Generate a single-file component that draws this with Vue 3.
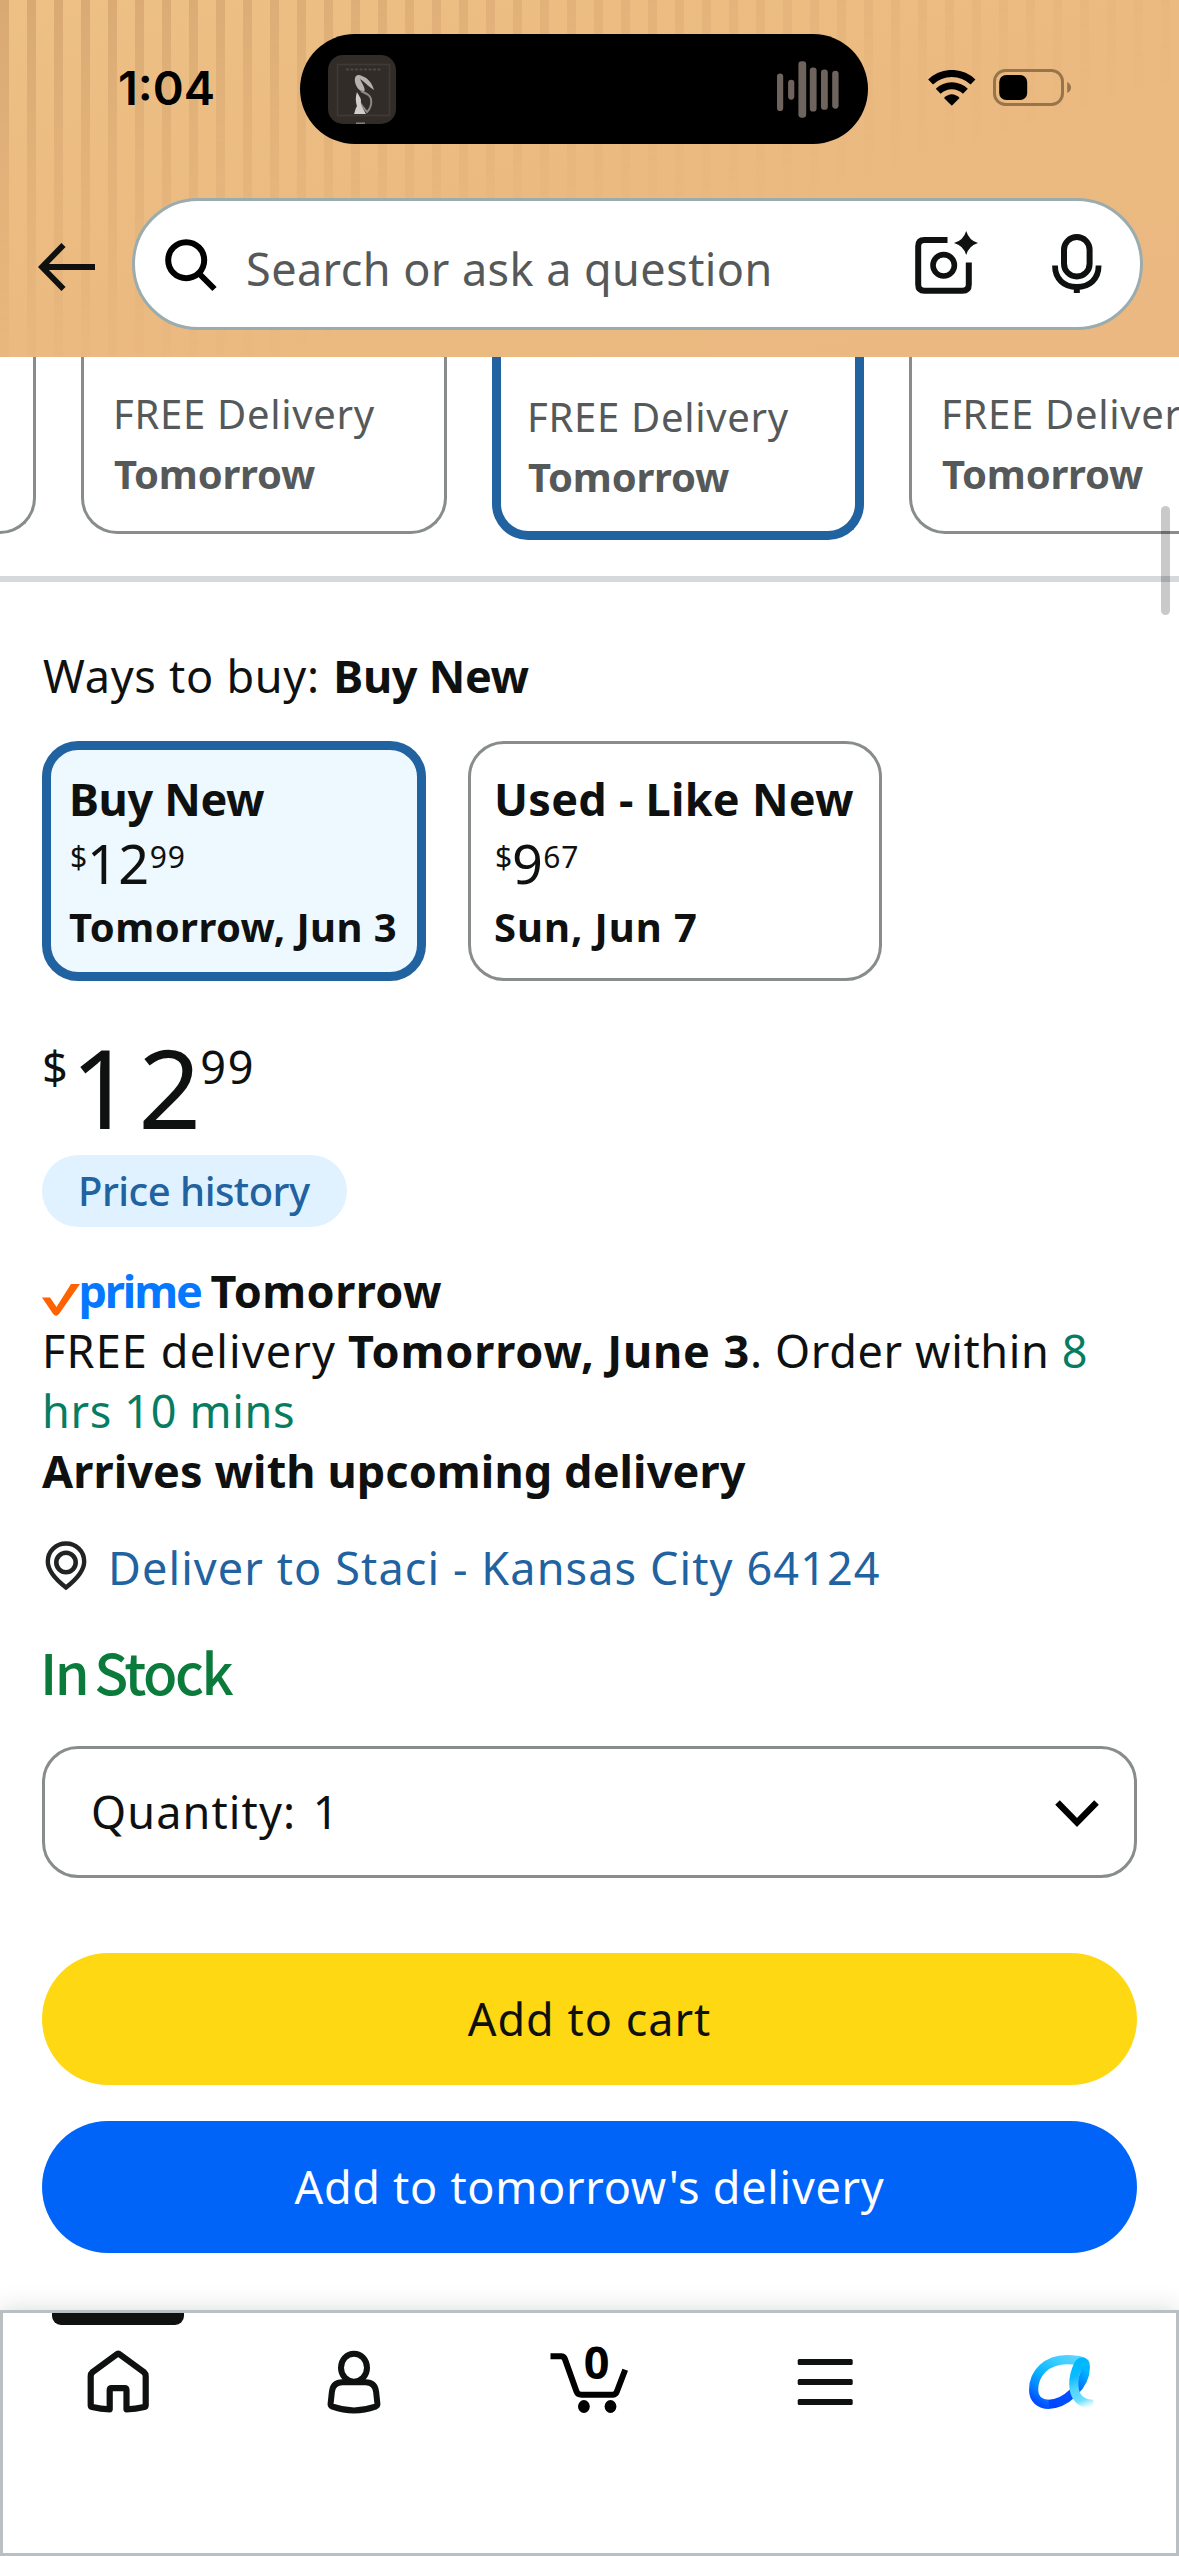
<script setup>
const deliveryCards = [
  { id: 'a', when: '', selected: false },
  { id: 'b', when: 'Tomorrow', selected: false },
  { id: 'c', when: 'Tomorrow', selected: true },
  { id: 'd', when: 'Tomorrow', selected: false },
]

const buyOptions = [
  { title: 'Buy New', whole: '12', cents: '99', date: 'Tomorrow, Jun 3', kind: 'new' },
  { title: 'Used - Like New', whole: '9', cents: '67', date: 'Sun, Jun 7', kind: 'used' },
]

const waveBars = [
  { x: 0, y: 12.5, w: 6.2, h: 37.5 },
  { x: 11.1, y: 18.7, w: 6.2, h: 20 },
  { x: 21.4, y: 0.3, w: 7.8, h: 56.4 },
  { x: 32.8, y: 6.5, w: 6.8, h: 44 },
  { x: 44, y: 8.5, w: 6.8, h: 40.3 },
  { x: 55.2, y: 9.7, w: 6.4, h: 38 },
]
</script>

<template>
  <div class="screen">
    <header class="header">
      <div class="stripes"></div>
      <div class="status">
        <span class="time">1:04</span>
        <div class="island">
          <svg class="album" width="68" height="69" viewBox="0 0 68 69">
            <rect width="68" height="69" rx="15" fill="#322c29" />
            <rect x="9.5" y="9.5" width="52" height="51" fill="none" stroke="#403a37" stroke-width="1.6" />
            <path d="M18 14.5h35" stroke="#4b4643" stroke-width="2" stroke-dasharray="3 1.5" />
            <path d="M27 27C26 20 30 19 34 21C40 23 44 28 46 35C41 32 38 28 32 24C35 30 38 34 36 37C31 36 28 32 27 27Z" fill="#b5b1ae" />
            <path d="M33 36C39 39 42 40 43 44C44 50 42 54 39 57C36 53 33 50 31 46" fill="none" stroke="#8d8885" stroke-width="2" />
            <path d="M29 37C27 43 28 48 29 51C27 54 27 57 26 59H38C35 53 32 50 33 46C33 42 30 40 29 37Z" fill="#d0cdca" />
            <path d="M28 68.2h9" stroke="#8b8785" stroke-width="1.4" />
          </svg>
          <svg class="wave" width="62" height="57" viewBox="0 0 62 57">
            <rect v-for="b in waveBars" :key="b.x" :x="b.x" :y="b.y" :width="b.w" :height="b.h" rx="3.1" fill="#6e645d" />
          </svg>
        </div>
        <svg class="wifi" width="48" height="36" viewBox="0 0 48 36">
          <path d="M2.6 12.8A30.5 30.5 0 0 1 45 12.8" fill="none" stroke="#000" stroke-width="7" transform="translate(0 -.8)" />
          <path d="M10.2 21.2A19.5 19.5 0 0 1 37.4 21.2" fill="none" stroke="#000" stroke-width="7" />
          <path d="M16 28Q23.8 20.500 31.6 28L23.800 35.700Z" fill="#000" />
        </svg>
        <svg class="battery" width="79" height="38" viewBox="0 0 79 38">
          <rect x="1.500" y="1.500" width="68" height="34" rx="11" fill="none" stroke="#97754b" stroke-width="3" />
          <rect x="6.200" y="6" width="28" height="25" rx="7" fill="#000" />
          <path d="M74.200 13Q78 15 78 18.500Q78 22 74.200 24Z" fill="#97754b" />
        </svg>
      </div>
      <div class="search-row">
        <svg class="back" width="58" height="48" viewBox="0 0 58 48">
          <path d="M57 24H4M25.500 2L4 24L25.500 46" fill="none" stroke="#0f1111" stroke-width="5.800" />
        </svg>
        <div class="search">
          <svg class="magnifier" width="54" height="54" viewBox="0 0 54 54">
            <circle cx="21.200" cy="21.200" r="18" fill="none" stroke="#000" stroke-width="6" />
            <path d="M34 34.500L49.500 50" stroke="#000" stroke-width="6" />
          </svg>
          <span class="placeholder">Search or ask a question</span>
          <svg class="camera" width="64" height="64" viewBox="0 0 64 64">
            <path d="M32.500 9H9.500Q3.200 9 3.200 15.300V53.500Q3.200 59.800 9.500 59.800H47.500Q53.800 59.800 53.800 53.500V31.500" fill="none" stroke="#0f1111" stroke-width="6" />
            <circle cx="28.700" cy="34.300" r="10.700" fill="none" stroke="#0f1111" stroke-width="5.600" />
            <path d="M51.200 0Q54 9.500 63 12Q54 14.500 51.200 24Q48.400 14.500 39 12Q48.400 9.500 51.200 0Z" fill="#0f1111" />
          </svg>
          <svg class="mic" width="50" height="60" viewBox="0 0 50 60">
            <rect x="12" y="3" width="25.600" height="39.500" rx="12.800" fill="none" stroke="#0f1111" stroke-width="6" />
            <path d="M3 31.500C3 45 12 53 24.800 53S46.600 45 46.600 31.500" fill="none" stroke="#0f1111" stroke-width="5.800" />
            <path d="M24.800 52V59" stroke="#0f1111" stroke-width="6" />
          </svg>
        </div>
      </div>
    </header>

    <section class="carousel">
      <div v-for="c in deliveryCards" :key="c.id" class="ship-card" :class="[`card-${c.id}`, { selected: c.selected }]">
        <template v-if="c.when">
          <p class="ship-free">FREE Delivery</p>
          <p class="ship-when">{{ c.when }}</p>
        </template>
      </div>
    </section>
    <div class="divider"></div>
    <div class="scrollbar"></div>

    <main class="content">
      <p class="ways"><span class="ways-label">Ways to buy: </span><b>Buy New</b></p>

      <div class="options">
        <div v-for="o in buyOptions" :key="o.title" class="option" :class="o.kind">
          <p class="opt-title">{{ o.title }}</p>
          <p class="opt-price"><span class="sup sign">$</span><span class="whole">{{ o.whole }}</span><span class="sup">{{ o.cents }}</span></p>
          <p class="opt-date">{{ o.date }}</p>
        </div>
      </div>

      <div class="price"><span class="p-sup p-sign">$</span><span class="p-whole">12</span><span class="p-sup p-cents">99</span></div>

      <div class="history">Price history</div>

      <div class="delivery">
        <div class="prime-line">
          <svg class="check" width="39" height="34" viewBox="0 0 39 34">
            <path d="M0 13.500H8L14.500 23L29 0H38L17 30Q14 33.500 11.200 30Z" fill="#ff6200" />
          </svg>
          <span class="prime">prime</span>
          <b class="prime-when">Tomorrow</b>
        </div>
        <p class="line"><span class="free">FREE delivery </span><b class="day">Tomorrow, June 3</b><span class="order">. Order within </span><span class="green">8</span></p>
        <p class="line green">hrs 10 mins</p>
        <p class="line"><b class="arrives">Arrives with upcoming delivery</b></p>
      </div>

      <div class="address">
        <svg class="pin" width="42" height="50" viewBox="0 0 42 50">
          <path d="M21 2.500C31 2.500 39.200 10 39.200 20.500C39.200 30 30 39.500 21 46.500C12 39.500 2.800 30 2.800 20.500C2.800 10 11 2.500 21 2.500Z" fill="none" stroke="#222424" stroke-width="4.400" />
          <circle cx="21" cy="21.500" r="9.700" fill="none" stroke="#222424" stroke-width="4.600" />
        </svg>
        <span class="address-text">Deliver to Staci - Kansas City 64124</span>
      </div>

      <p class="stock">In Stock</p>

      <div class="quantity">
        <span class="q-label">Quantity:</span><span class="q-value">1</span>
        <svg class="chevron" width="44" height="28" viewBox="0 0 44 28">
          <path d="M2.500 2.500L22 22.500L41.500 2.500" fill="none" stroke="#000" stroke-width="6.400" />
        </svg>
      </div>

      <div class="btn cart">Add to cart</div>
      <div class="btn tomorrow">Add to tomorrow's delivery</div>
    </main>

    <nav class="nav">
      <div class="tab active">
        <svg width="90" height="72" viewBox="0 0 90 72">
          <g transform="translate(14.700 5.700)" fill="none" stroke="#0f1111" stroke-width="6.200" stroke-linejoin="round">
            <path d="M28.500 4Q30.500 2.200 32.500 4L56 21.200Q58 23 58 25.500V54.500Q58 56 56.500 56.400Q48 58.600 38.800 58.600V39.500Q38.800 37.400 36.800 37.400H24Q22 37.400 22 39.500V58.600Q13 58.600 4.500 56.400Q3 56 3 54.500V25.500Q3 23 5 21.200Z" />
          </g>
        </svg>
      </div>
      <div class="tab">
        <svg width="90" height="72" viewBox="0 0 90 72">
          <g transform="translate(18.400 5.700)" fill="none" stroke="#0f1111" stroke-width="6" stroke-linejoin="round">
            <ellipse cx="26.600" cy="17" rx="13" ry="14" />
            <path d="M15 31.600H38.200Q47.500 31.600 48.700 41L50 53Q50.200 55 48 56Q26.600 63.500 5.200 56Q3 55 3.200 53L4.500 41Q5.700 31.600 15 31.600Z" />
          </g>
        </svg>
      </div>
      <div class="tab">
        <svg class="cart-icon" width="90" height="92" viewBox="0 -20 90 92">
          <g transform="translate(6.500 1)">
            <path d="M0 10.300H10.500Q13.500 10.300 14.500 13.300L26 45.500Q27.200 48.700 31 48.700H62Q65 48.700 66.200 46L74.700 23.800" fill="none" stroke="#000" stroke-width="6" stroke-linejoin="round" />
            <ellipse cx="33.400" cy="60.500" rx="5.900" ry="6.400" fill="#000" />
            <ellipse cx="60" cy="60.500" rx="5.900" ry="6.400" fill="#000" />
            <text x="46.200" y="32.500" class="count" text-anchor="middle">0</text>
          </g>
        </svg>
      </div>
      <div class="tab">
        <svg width="90" height="72" viewBox="0 0 90 72" fill="#0f1111">
          <rect x="17.700" y="14" width="55" height="6" rx="1.500" />
          <rect x="17.700" y="34" width="55" height="6" rx="1.500" />
          <rect x="17.700" y="54" width="55" height="6" rx="1.500" />
        </svg>
      </div>
      <div class="tab">
        <svg width="90" height="72" viewBox="0 0 90 72">
          <defs>
            <linearGradient id="loop" gradientUnits="userSpaceOnUse" x1="48" y1="4" x2="16" y2="52">
              <stop offset="0" stop-color="#5ad4ff" />
              <stop offset=".25" stop-color="#35ccff" />
              <stop offset=".55" stop-color="#08b4ff" />
              <stop offset=".85" stop-color="#0578ff" />
              <stop offset="1" stop-color="#0050ff" />
            </linearGradient>
            <linearGradient id="rise" gradientUnits="userSpaceOnUse" x1="24" y1="50" x2="56" y2="14">
              <stop offset="0" stop-color="#0048ff" />
              <stop offset=".45" stop-color="#0052ff" />
              <stop offset="1" stop-color="#00b8ff" />
            </linearGradient>
            <linearGradient id="tail" gradientUnits="userSpaceOnUse" x1="50" y1="8" x2="66" y2="50">
              <stop offset="0" stop-color="#00b8ff" />
              <stop offset=".25" stop-color="#0bbcff" />
              <stop offset=".5" stop-color="#4fd3ff" />
              <stop offset=".8" stop-color="#6fdfff" />
              <stop offset="1" stop-color="#8fe4ff" stop-opacity=".05" />
            </linearGradient>
          </defs>
          <g transform="translate(12.900 10)" fill="none" stroke-width="9.200">
            <path d="M55 7C50 5.200 44 4.600 38 4.600C18 4.600 4.700 18 4.700 35C4.700 44 11 49.300 20 49.300" stroke="url(#loop)" />
            <path d="M19.500 49.300C36 49.300 56.500 31 56.500 12" stroke="url(#rise)" />
            <path d="M56.500 12C56.500 5.500 51.500 6 49.500 10C46.500 16 44.900 22 44.900 29C44.900 41 51 49.300 64.500 49.300" stroke="url(#tail)" />
          </g>
        </svg>
      </div>
    </nav>
  </div>
</template>

<style>
body {
  margin: 0;
  background: #fff;
}
</style>

<style scoped>
.screen {
  position: relative;
  display: flex;
  flex-direction: column;
  width: 1179px;
  height: 2556px;
  overflow: hidden;
  background: #fff;
  color: #0f1111;
  font-family: "Noto Sans", sans-serif;
  font-size: 45px;
  line-height: 60px;
}
p {
  margin: 0;
  white-space: nowrap;
}
svg {
  display: block;
  flex: none;
}

/* Header */
.header {
  position: relative;
  flex: none;
  height: 357px;
  background: linear-gradient(165deg, #edc085, #ebba81 50%, #eab880);
}
.stripes {
  position: absolute;
  inset: 0;
  background: repeating-linear-gradient(90deg, #cf9f6b 0 9px, transparent 9px 27px);
  mask-image: linear-gradient(163deg, rgba(0, 0, 0, 0.7), rgba(0, 0, 0, 0.36) 25%, rgba(0, 0, 0, 0.08) 50%, transparent 62%);
}
.status {
  position: relative;
  display: flex;
  align-items: flex-start;
  height: 198px;
}
.time {
  width: 182px;
  margin: 58px 0 0 118px;
  font: 600 47px/60px Inter, sans-serif;
  color: #000;
}
.island {
  display: flex;
  align-items: center;
  justify-content: space-between;
  box-sizing: border-box;
  width: 568px;
  height: 110px;
  margin-top: 34px;
  padding: 0 29.500px 0 28px;
  border-radius: 55px;
  background: #000;
}
.wifi {
  margin: 70px 0 0 60px;
}
.battery {
  margin: 69px 0 0 17px;
}
.search-row {
  position: relative;
  display: flex;
  align-items: center;
}
.back {
  margin: 6px 36px 0 38px;
}
.search {
  display: flex;
  align-items: center;
  box-sizing: border-box;
  width: 1010.500px;
  height: 132px;
  border: 3px solid #9aacae;
  border-radius: 68px;
  background: #fff;
}
.magnifier {
  margin: 4px 0 0 30px;
}
.placeholder {
  width: 669px;
  margin: 10px 0 0 27px;
  color: #565959;
  letter-spacing: 0.430px;
  white-space: nowrap;
}
.camera {
  margin: -2px 73px 0 0;
}

/* Delivery option cards */
.carousel {
  display: flex;
  flex: none;
  gap: 45px;
  height: 219px;
  overflow: hidden;
}
.ship-card {
  box-sizing: border-box;
  flex: none;
  width: 366px;
  height: 177px;
  padding: 27px 0 0 29px;
  border: 3px solid #888c8c;
  border-top: 0;
  border-radius: 0 0 36px 36px;
  font-size: 40px;
  color: #565959;
}
.card-a {
  margin-left: -330px;
}
.ship-card.selected {
  width: 372px;
  height: 183px;
  padding: 30px 0 0 26px;
  border: 9px solid #2162a1;
  border-top: 0;
}
.ship-free {
  letter-spacing: 0.700px;
}
.ship-when {
  padding-left: 1px;
  font-weight: 700;
  letter-spacing: -0.210px;
}
.divider {
  flex: none;
  height: 6px;
  background: #d5d9d9;
}
.scrollbar {
  position: absolute;
  top: 506px;
  left: 1161px;
  width: 9px;
  height: 109px;
  border-radius: 5px;
  background: rgba(0, 0, 0, 0.21);
}

/* Product buy box */
.content {
  display: flex;
  flex: 1;
  flex-direction: column;
  align-items: flex-start;
  padding: 64px 42px 0;
}
.ways {
  padding-left: 1px;
}
.ways-label {
  letter-spacing: 0.730px;
}
.ways b {
  margin-left: 1px;
  letter-spacing: -0.300px;
}
.options {
  display: flex;
  gap: 42px;
  margin-top: 35px;
}
.option {
  box-sizing: border-box;
  height: 240px;
  border-radius: 36px;
}
.option.new {
  width: 384px;
  padding: 19px 0 0 18px;
  border: 9px solid #2162a1;
  background: #edf8ff;
}
.option.used {
  width: 414px;
  padding: 25px 0 0 23px;
  border: 3px solid #888c8c;
}
.opt-title {
  font-weight: 700;
  letter-spacing: 0.260px;
}
.option.new .opt-title {
  letter-spacing: -0.350px;
}
.opt-price {
  display: flex;
  height: 68px;
}
.sup {
  margin-top: 10px;
  font-size: 30px;
  line-height: 36px;
  letter-spacing: 0.800px;
}
.sup.sign {
  padding-left: 1px;
}
.whole {
  margin: 0 0 0 -1px;
  font-size: 54px;
  line-height: 68px;
  letter-spacing: 0.500px;
}
.opt-date {
  font-size: 40px;
  font-weight: 700;
  letter-spacing: 0.450px;
}
.option.used .opt-date {
  padding-left: 0;
  letter-spacing: 0.950px;
}
.price {
  display: flex;
  height: 174px;
}
.p-sup {
  margin-top: 63px;
  line-height: 45px;
  letter-spacing: 1.700px;
}
.p-whole {
  margin: 50px 0 0 1px;
  font-size: 110px;
  line-height: 110px;
  letter-spacing: 5px;
}
.p-cents {
  margin-left: -6px;
}
.history {
  box-sizing: border-box;
  width: 305px;
  height: 72px;
  padding-left: 36px;
  border-radius: 36px;
  background: #e0f2ff;
  color: #2162a1;
  font-size: 40px;
  font-weight: 500;
  line-height: 72px;
  letter-spacing: -0.510px;
}
.delivery {
  margin-top: 34px;
}
.prime-line {
  display: flex;
  height: 60px;
}
.check {
  margin-top: 23px;
}
.prime {
  width: 132px;
  margin-left: -2.500px;
  color: #0578ff;
  font-weight: 700;
  letter-spacing: -2.100px;
}
.prime-when {
  letter-spacing: 0.430px;
}
.free {
  letter-spacing: 1.150px;
}
.day {
  margin-left: -1px;
  letter-spacing: 0.850px;
}
.order {
  letter-spacing: 0.650px;
}
.green {
  color: #067d62;
  letter-spacing: 0.670px;
}
.arrives {
  letter-spacing: 0.100px;
}
.address {
  display: flex;
  align-items: flex-start;
  margin-top: 37px;
  padding-left: 3px;
  color: #2162a1;
}
.pin {
  margin-top: 3px;
}
.address-text {
  margin-left: 21px;
  letter-spacing: 1.100px;
}
.stock {
  margin-top: 40px;
  margin-left: -2px;
  color: #0b7b3c;
  font-family: "Noto Sans CJK SC", sans-serif;
  font-size: 56px;
  font-weight: 500;
  line-height: 66px;
  letter-spacing: -2.500px;
  word-spacing: -3px;
}
.quantity {
  display: flex;
  flex: none;
  align-items: center;
  box-sizing: border-box;
  width: 1095px;
  height: 131.500px;
  margin-top: 42px;
  padding: 0 35px 0 46px;
  border: 3px solid #888c8c;
  border-radius: 36px;
}
.q-label {
  letter-spacing: 1.120px;
}
.q-value {
  margin-left: 16.500px;
}
.chevron {
  margin: 4px 0 0 auto;
}
.btn {
  display: flex;
  flex: none;
  align-items: center;
  justify-content: center;
  box-sizing: border-box;
  width: 1095px;
  height: 131.500px;
  padding-top: 1px;
  border-radius: 66px;
}
.cart {
  margin-top: 75.500px;
  background: #ffd814;
  letter-spacing: 1px;
}
.tomorrow {
  margin-top: 36.500px;
  background: #0064f9;
  color: #fff;
  letter-spacing: 0.710px;
}

/* Bottom navigation */
.nav {
  position: relative;
  display: flex;
  flex: none;
  box-sizing: border-box;
  height: 246px;
  border: 3px solid #b9bfc3;
  background: #fff;
  box-shadow: 0 0 24px rgba(15, 40, 30, 0.16);
}
.tab {
  position: relative;
  display: flex;
  flex: none;
  justify-content: center;
  width: 235.800px;
  left: -3px;
}
.tab svg {
  margin-top: 32px;
}
.tab .cart-icon {
  margin-top: 12px;
}
.tab.active::before {
  content: "";
  position: absolute;
  top: 0;
  left: 52px;
  width: 132px;
  height: 12px;
  border-radius: 0 0 9px 9px;
  background: #0f1111;
}
.count {
  font: 700 45px "Noto Sans", sans-serif;
  fill: #000;
}
</style>
